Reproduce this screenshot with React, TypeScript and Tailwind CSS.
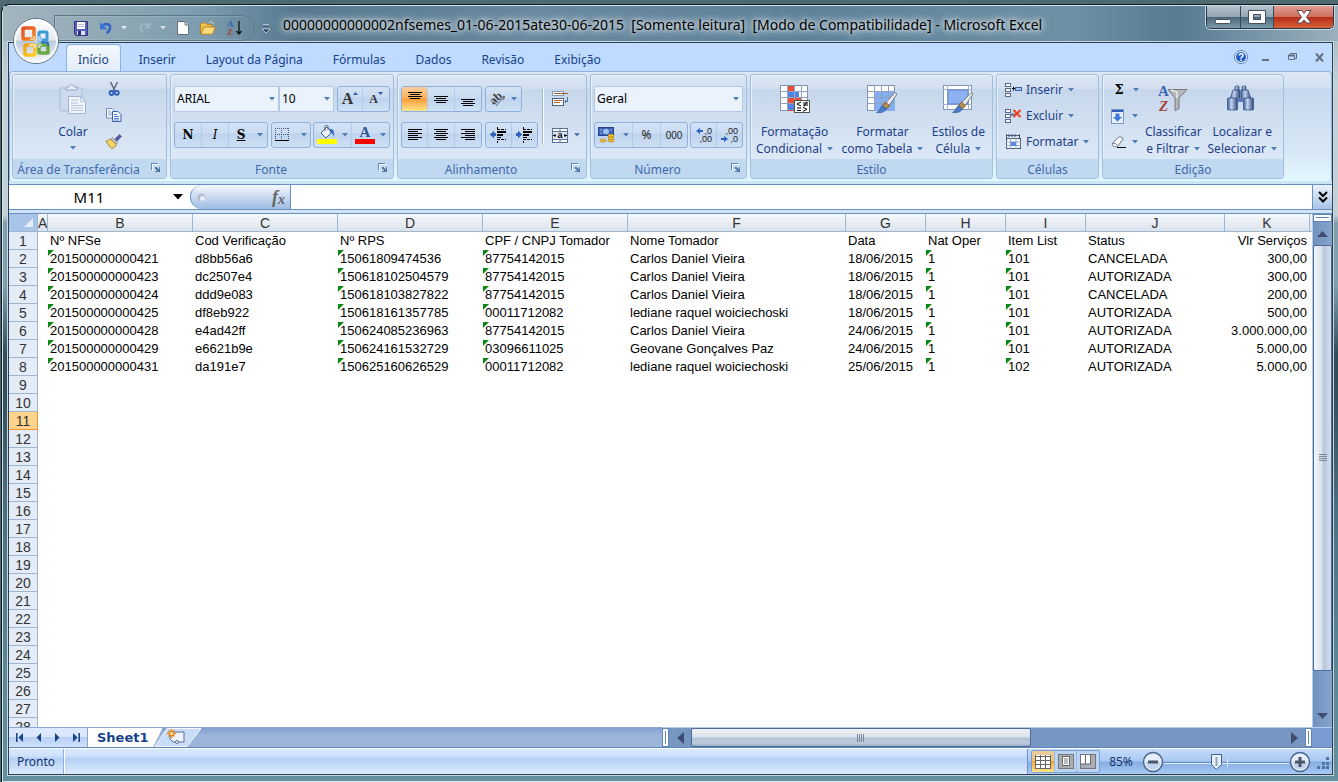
import React from 'react';

interface Row {
  nfse: string;
  cod: string;
  rps: string;
  doc: string;
  nome: string;
  data: string;
  nat: string;
  item: string;
  status: string;
  valor: string;
}

const HEAD: Row = {
  nfse: 'Nº NFSe',
  cod: 'Cod Verificação',
  rps: 'Nº RPS',
  doc: 'CPF / CNPJ Tomador',
  nome: 'Nome Tomador',
  data: 'Data',
  nat: 'Nat Oper',
  item: 'Item List',
  status: 'Status',
  valor: 'Vlr Serviços',
};

const DATA: Row[] = [
  { nfse: '201500000000421', cod: 'd8bb56a6', rps: '15061809474536', doc: '87754142015', nome: 'Carlos Daniel Vieira', data: '18/06/2015', nat: '1', item: '101', status: 'CANCELADA', valor: '300,00' },
  { nfse: '201500000000423', cod: 'dc2507e4', rps: '150618102504579', doc: '87754142015', nome: 'Carlos Daniel Vieira', data: '18/06/2015', nat: '1', item: '101', status: 'AUTORIZADA', valor: '300,00' },
  { nfse: '201500000000424', cod: 'ddd9e083', rps: '150618103827822', doc: '87754142015', nome: 'Carlos Daniel Vieira', data: '18/06/2015', nat: '1', item: '101', status: 'CANCELADA', valor: '200,00' },
  { nfse: '201500000000425', cod: 'df8eb922', rps: '150618161357785', doc: '00011712082', nome: 'lediane raquel woiciechoski', data: '18/06/2015', nat: '1', item: '101', status: 'AUTORIZADA', valor: '500,00' },
  { nfse: '201500000000428', cod: 'e4ad42ff', rps: '150624085236963', doc: '87754142015', nome: 'Carlos Daniel Vieira', data: '24/06/2015', nat: '1', item: '101', status: 'AUTORIZADA', valor: '3.000.000,00' },
  { nfse: '201500000000429', cod: 'e6621b9e', rps: '150624161532729', doc: '03096611025', nome: 'Geovane Gonçalves Paz', data: '24/06/2015', nat: '1', item: '101', status: 'AUTORIZADA', valor: '5.000,00' },
  { nfse: '201500000000431', cod: 'da191e7', rps: '150625160626529', doc: '00011712082', nome: 'lediane raquel woiciechoski', data: '25/06/2015', nat: '1', item: '102', status: 'AUTORIZADA', valor: '5.000,00' },
];

const FIELDS: (keyof Row)[] = ['nfse', 'cod', 'rps', 'doc', 'nome', 'data', 'nat', 'item', 'status', 'valor'];
const FLAGGED = ['nfse', 'rps', 'doc', 'nat', 'item'];
const LETTERS = ['A', 'B', 'C', 'D', 'E', 'F', 'G', 'H', 'I', 'J', 'K'];
const TABS = ['Início', 'Inserir', 'Layout da Página', 'Fórmulas', 'Dados', 'Revisão', 'Exibição'];

/* ---------- small pieces ---------- */

function Caret() {
  return (
    <svg width="6" height="4" viewBox="0 0 6 4" className="shrink-0">
      <path d="M0 0h6L3 3.5z" fill="#4f7db5" />
    </svg>
  );
}

interface LinesProps {
  rows: [number, number][];
  top?: number;
}

// horizontal text lines, each given as [x, width]
function Lines({ rows, top = 3 }: LinesProps) {
  return (
    <svg width="16" height="16" shapeRendering="crispEdges">
      {rows.map(([x, w], i) => (
        <rect key={i} x={x} y={top + i * 2} width={w} height="1" fill="#000" />
      ))}
    </svg>
  );
}

function Btn({ label, className = '', children }: { label: string; className?: string; children: React.ReactNode }) {
  return (
    <button type="button" aria-label={label} className={`flex items-center justify-center ${className}`}>
      {children}
    </button>
  );
}

function BtnGroup({ children }: { children: React.ReactNode }) {
  return (
    <div className="flex h-[26px] shrink-0 divide-x divide-[#b3cbea] overflow-hidden rounded-[3px] border border-[#8fb0dd] bg-[linear-gradient(#d3e2f4_0%,#cbdcf1_42%,#bdd3ee_46%,#cfe0f5_100%)]">
      {children}
    </div>
  );
}

function Combo({ label, options, className }: { label: string; options: string[]; className: string }) {
  return (
    <div className={`relative ${className}`}>
      <select
        aria-label={label}
        className="h-[26px] w-full appearance-none border border-[#b3c9e6] bg-[#eaf2fb] pl-[2px] text-[12px] text-black outline-none"
      >
        {options.map((o) => (
          <option key={o}>{o}</option>
        ))}
      </select>
      <span className="pointer-events-none absolute inset-y-0 right-1 flex items-center">
        <Caret />
      </span>
    </div>
  );
}

function Group({ title, className, launcher, children }: { title: string; className: string; launcher?: boolean; children: React.ReactNode }) {
  return (
    <section
      className={`flex h-[105px] shrink-0 flex-col overflow-hidden rounded-[3px] border border-[#a3bfdf] bg-[linear-gradient(#dbe6f3_0%,#d3e0f0_13%,#c7d7eb_14%,#dbe8f6_80%)] shadow-[inset_1px_1px_0_#e9f1fa] ${className}`}
    >
      <div className="flex h-[84px]">{children}</div>
      <div className="relative flex h-[19px] items-center justify-center bg-[#c1d8f1] pt-[2px] text-[#3e6aaa]">
        <h2 className={launcher ? 'whitespace-nowrap pr-[22px]' : ''}>{title}</h2>
        {launcher && (
          <button type="button" aria-label={`Opções de ${title}`} className="absolute right-[5px] top-1">
            <svg width="10" height="10" shapeRendering="crispEdges">
              <path d="M.5 7V.5H7" fill="none" stroke="#6088b5" />
              <path d="M1.5 8V1.5H8" fill="none" stroke="#fff" />
              <path d="M4 4h2v1h1v1h1V4h1v5H4V8h2V7H5V6H4z" fill="#55789f" />
            </svg>
          </button>
        )}
      </div>
    </section>
  );
}

function LargeButton({ icon, lines, caretBelow }: { icon: React.ReactNode; lines: string[]; caretBelow?: boolean }) {
  const last = lines[lines.length - 1];
  return (
    <button type="button" className="flex flex-col items-center whitespace-nowrap pt-2 text-[#1e3f8a]">
      <span className="mb-2 flex h-8 w-8 items-center justify-center">{icon}</span>
      {lines.slice(0, -1).map((l) => (
        <span key={l} className="leading-[17px]">{l}</span>
      ))}
      <span className="flex items-center gap-[5px] leading-[17px]">
        {last}
        {!caretBelow && <Caret />}
      </span>
      {caretBelow && <span className="flex h-[15px] items-center"><Caret /></span>}
    </button>
  );
}

/* ---------- icons ---------- */

function OfficeLogo() {
  return (
    <svg width="48" height="48" viewBox="0 0 48 48">
      <defs>
        <linearGradient id="orb" x1="0" y1="0" x2="0" y2="1">
          <stop offset="0" stopColor="#fff" />
          <stop offset=".48" stopColor="#e3e8ee" />
          <stop offset=".5" stopColor="#b9c8dd" />
          <stop offset="1" stopColor="#fbfdff" />
        </linearGradient>
        <linearGradient id="og1" x1="0" y1="0" x2="1" y2="1">
          <stop offset="0" stopColor="#e8502a" />
          <stop offset="1" stopColor="#f08a1e" />
        </linearGradient>
        <linearGradient id="og2" x1="0" y1="0" x2="1" y2="1">
          <stop offset="0" stopColor="#f3a21b" />
          <stop offset="1" stopColor="#fbd02a" />
        </linearGradient>
      </defs>
      <circle cx="23" cy="24" r="22.5" fill="url(#orb)" stroke="#5d7184" />
      <circle cx="23" cy="24" r="21" fill="none" stroke="#fff" strokeWidth="2" opacity=".8" />
      <g fill="none" strokeLinejoin="round">
        <rect x="10" y="11" width="11" height="11" rx="1" stroke="url(#og1)" strokeWidth="3.500" />
        <rect x="12" y="28" width="10" height="10" rx="1" stroke="url(#og2)" strokeWidth="3.500" />
        <rect x="26" y="15" width="8" height="8" rx="1" stroke="#3a9bd8" strokeWidth="3" />
        <rect x="26" y="28" width="9" height="8" rx="1" stroke="#6aa842" strokeWidth="3.500" />
        <path d="M17 22h4v-3M16 28h6v3M26 19v4h3M26 31v-3h3" stroke="#fff" strokeWidth="1.500" opacity=".7" />
        <path d="M28 25.500h7V29" stroke="#2d6fc0" strokeWidth="2" />
      </g>
    </svg>
  );
}

function SaveIcon() {
  return (
    <svg width="14" height="15" viewBox="0 0 14 15">
      <path d="M.5.5h13v14H2L.5 13z" fill="#5a5ec0" stroke="#34368a" />
      <rect x="3" y="1" width="8" height="7" fill="#fff" />
      <path d="M4 3.500h6M4 5.500h6" stroke="#b8bce0" />
      <rect x="3" y="10" width="8" height="4" fill="#dfe2f2" />
      <rect x="4" y="10" width="3" height="4" fill="#2c2e70" />
    </svg>
  );
}

function UndoIcon() {
  return (
    <svg width="14" height="14" viewBox="0 0 14 14">
      <path d="M3.500 5C6.500 1.500 12 3 11 7.500c-.3 2-1.500 3.500-3.500 4.500" fill="none" stroke="#2f63c4" strokeWidth="2.400" />
      <path d="M1 1v7.500h7.500z" fill="#3f76d6" />
    </svg>
  );
}

function RedoIcon() {
  return (
    <svg width="14" height="14" viewBox="0 0 14 14">
      <path d="M10 5C7 1.500 2 3 2.500 7c.2 1.500 1.200 3 2.500 4" fill="none" stroke="#9fb5c6" strokeWidth="2" />
      <path d="M12.500 1v6.500H6z" fill="#9fb5c6" />
    </svg>
  );
}

function NewIcon() {
  return (
    <svg width="12" height="14" viewBox="0 0 12 14">
      <path d="M.5.5H8l3.500 3.500v9.500H.5z" fill="#fff" stroke="#6a7280" />
      <path d="M8 .5V4h3.500" fill="#dde4ee" stroke="#6a7280" />
    </svg>
  );
}

function OpenIcon() {
  return (
    <svg width="16" height="14" viewBox="0 0 16 14">
      <path d="M.5 13V3.500L2 2h4l1 1.500h5V6" fill="#f3c44c" stroke="#b5842a" />
      <path d="M.8 13.200L4 6h11.500l-3 7.200z" fill="#fbdc7d" stroke="#b5842a" />
      <path d="M9 2c2-2 4-1 4.500 1" fill="none" stroke="#f6e6b0" />
    </svg>
  );
}

function SortAZIcon() {
  return (
    <svg width="15" height="16" viewBox="0 0 15 16">
      <text x="0" y="7" fontFamily="Liberation Serif" fontWeight="700" fontSize="9" fill="#2f62b0">A</text>
      <text x="0" y="15" fontFamily="Liberation Serif" fontWeight="700" fontSize="9" fill="#a8403c">Z</text>
      <path d="M12 1v13M9.500 11l2.500 3 2.500-3" fill="none" stroke="#111" strokeWidth="1.300" />
    </svg>
  );
}

function PasteIcon() {
  return (
    <svg width="28" height="30" viewBox="0 0 28 30">
      <rect x="1" y="4" width="22" height="23" rx="1" fill="#cdd9ec" stroke="#a9bcd8" />
      <path d="M7 6V3h3c0-3 5-3 5 0h3v3z" fill="#e8eef6" stroke="#94a8c4" />
      <path d="M9.500 12.500h12l5 5v12h-17z" fill="#f1f5fb" stroke="#9fb4d2" />
      <path d="M21.500 12.500v5h5M12 16h7M12 19h7M12 21.500h12M12 24h12M12 26.500h12" fill="none" stroke="#b4c5de" />
    </svg>
  );
}

function CutIcon() {
  return (
    <svg width="12" height="14" viewBox="0 0 12 14">
      <path d="M2.500 0L7 9M9.500 0L5 9" stroke="#5c6c80" strokeWidth="1.500" />
      <circle cx="3.500" cy="11" r="2" fill="none" stroke="#2f5cb8" strokeWidth="1.800" />
      <circle cx="8.800" cy="10.800" r="2" fill="none" stroke="#2f5cb8" strokeWidth="1.800" />
    </svg>
  );
}

function CopyIcon() {
  return (
    <svg width="16" height="14" viewBox="0 0 16 14">
      <path d="M.5.5H6L8.500 3v7H.5z" fill="#fff" stroke="#6c86b8" />
      <path d="M2 3h3M2 5h4M2 7h4" stroke="#7ea2dc" />
      <path d="M6.500 3.500H12l3 3v7H6.500z" fill="#eef4ff" stroke="#3b5ea8" />
      <path d="M8 6.500h3M8 8.500h5M8 10.500h5M8 12h5" stroke="#5585d6" />
    </svg>
  );
}

function BrushIcon() {
  return (
    <svg width="17" height="15" viewBox="0 0 17 15">
      <path d="M10 5l4.500-4.500 2 2L12 7z" fill="#5b5aa8" stroke="#3c3b78" strokeWidth=".6" />
      <path d="M7.500 3.500l5.500 5-1.500 1.500-5.500-4.500z" fill="#c9ccd2" stroke="#6a6a70" strokeWidth=".6" />
      <path d="M5.500 5L.8 7.500c2 .5 2.500 5 6 7 2-.2 3.500-2 4.500-3.800z" fill="#f2d56a" stroke="#9a7420" strokeWidth=".8" />
    </svg>
  );
}

function BordersIcon() {
  return (
    <svg width="14" height="14" viewBox="0 0 14 14" shapeRendering="crispEdges">
      <path d="M0 .5h14M.5 0v12M6.500 0v12M13.500 0v12M0 6.500h14" stroke="#4a5a70" strokeDasharray="1 1" />
      <rect x="0" y="12" width="14" height="1" fill="#000" />
    </svg>
  );
}

function BucketIcon() {
  return (
    <svg width="20" height="20" viewBox="0 0 20 20">
      <path d="M4 8l6-6 5 5-6 6z" fill="#eef2f8" stroke="#4a5f80" />
      <path d="M8 6V1.500c0-1.500 3-1.500 3 0V5" fill="none" stroke="#4a5f80" />
      <path d="M12 4c4-1 6 2 5 8-1-3-2-4-4-4.500z" fill="#3a6fc0" />
      <rect x="0" y="14" width="20" height="5" fill="#ff0" />
    </svg>
  );
}

function FontColorIcon() {
  return (
    <svg width="20" height="20" viewBox="0 0 20 20">
      <text x="10" y="12" textAnchor="middle" fontFamily="Liberation Serif" fontWeight="700" fontSize="15" fill="#2f5496">A</text>
      <rect x="0" y="14" width="20" height="5" fill="#f00" />
    </svg>
  );
}

function OrientationIcon() {
  return (
    <svg width="16" height="16" viewBox="0 0 16 16" className="overflow-visible">
      <text x="0" y="11" transform="rotate(-42 6 8)" fontFamily="Liberation Serif" fontWeight="700" fontSize="12" fill="#3b3b3b">ab</text>
      <path d="M6 15l8-9M10.500 6.500L14.500 5l-1 4" fill="none" stroke="#666" />
    </svg>
  );
}

function WrapIcon() {
  return (
    <svg width="17" height="16" viewBox="0 0 17 16" shapeRendering="crispEdges">
      <rect x=".5" y=".5" width="11" height="4" fill="#fff" stroke="#8a98b0" />
      <path d="M2 2.500h14" stroke="#a0602c" />
      <rect x=".5" y="7.500" width="11" height="7" fill="#fff" stroke="#4a6088" />
      <path d="M2 9.500h8M2 11.500h6" stroke="#b06020" />
      <path d="M15.500 6v4h-3M13.500 8.500v3" fill="none" stroke="#55709a" />
    </svg>
  );
}

function MergeIcon() {
  return (
    <svg width="16" height="15" viewBox="0 0 16 15">
      <rect x=".5" y=".5" width="15" height="14" fill="#fff" stroke="#5b7096" />
      <path d="M0 3.500h16M0 11.500h16M8 0v3.500M8 11.500V15" stroke="#5b7096" />
      <rect x="1" y="4" width="14" height="7" fill="#dce8f8" />
      <text x="8" y="10" textAnchor="middle" fontFamily="Liberation Sans" fontWeight="700" fontSize="9" fill="#000">a</text>
      <path d="M1 7.500h3M12 7.500h3M3 6v3M13 6v3" stroke="#000" />
    </svg>
  );
}

function IndentIcon({ right }: { right?: boolean }) {
  return (
    <svg width="17" height="16" viewBox="0 0 17 16" shapeRendering="crispEdges">
      <path d="M7 2.500h9M7 12.500h9" stroke="#000" strokeDasharray="3 1" />
      <path d="M7 5h9M7 8h6" stroke="#000" strokeWidth="2" />
      <path d="M7 10.500h4M7.500 0v2M7.500 14v2" stroke="#000" />
      <path d={right ? 'M0 6h2V4l4 3.500L2 11V9H0z' : 'M6 6H4V4L0 7.500 4 11V9h2z'} fill="#2f62c0" />
    </svg>
  );
}

function MoneyIcon() {
  return (
    <svg width="17" height="16" viewBox="0 0 17 16">
      <rect x=".5" y=".5" width="15" height="8" fill="#3a62b8" stroke="#234488" />
      <ellipse cx="8" cy="4.500" rx="3" ry="2.800" fill="#9fc0f0" />
      <path d="M2 3h2M2 6h2M12 3h2" stroke="#9fc0f0" />
      <g fill="#f5c03c" stroke="#a87412" strokeWidth=".6">
        <ellipse cx="13" cy="13.500" rx="3" ry="1.500" />
        <ellipse cx="13" cy="11" rx="3" ry="1.500" />
        <ellipse cx="13" cy="8.500" rx="3" ry="1.500" />
        <ellipse cx="5" cy="13.500" rx="3" ry="1.500" />
      </g>
    </svg>
  );
}

function DecimalIcon({ less }: { less?: boolean }) {
  return (
    <svg width="18" height="18" viewBox="0 0 18 18">
      <g fontFamily="Liberation Sans" fontSize="9" fill="#222">
        <text x="17" y="8" textAnchor="end">{less ? ',00' : ',0'}</text>
        <text x="17" y="16" textAnchor="end">{less ? ',0' : ',00'}</text>
      </g>
      <path d={less ? 'M0 12h3v-2l4 3-4 3v-2H0z' : 'M8 4H5V2L1 5l4 3V6h3z'} fill="#2f62c0" />
    </svg>
  );
}

function Grid({ children }: { children?: React.ReactNode }) {
  return (
    <>
      <rect x="1.500" y="1.500" width="27" height="25" fill="#fff" stroke="#8093b0" />
      {children}
      <path d="M1 7.500h28M1 13.500h28M1 19.500h28M8.500 1v26M15.500 1v26M22.500 1v26" stroke="#8ea3c4" />
    </>
  );
}

function PaintBrush() {
  return (
    <g>
      <path d="M29 8.500l2 1.500-8.500 12.500-3.500-3z" fill="#e8e8ea" stroke="#66686e" strokeWidth=".8" />
      <path d="M19.500 18l4 3.500-3 3.500-4-3.500z" fill="#b8924a" stroke="#6b4f20" strokeWidth=".8" />
      <path d="M16.500 21.500l4 3.500c-2 3.500-6 4-10 3.500 3-1 3-4.500 6-7z" fill="#4a7cc8" stroke="#2d5596" strokeWidth=".6" />
    </g>
  );
}

function CondFormatIcon() {
  return (
    <svg width="32" height="30" viewBox="0 0 32 30">
      <Grid>
        <rect x="9" y="2" width="6" height="25" fill="#ea4f37" />
        <rect x="9" y="8" width="11" height="5" fill="#5485e0" />
        <rect x="9" y="14" width="13" height="5" fill="#ea4f37" />
        <rect x="9" y="20" width="6" height="6" fill="#5485e0" />
      </Grid>
      <rect x="15.500" y="16.500" width="15" height="12" fill="#fff" stroke="#555" />
      <path d="M22 18l-4 2 4 2M18 24h4M18 26.500h4M24 19h5M24 21h5M28 17.500l-3 5M24 23.500l4 1.800-4 2" fill="none" stroke="#000" />
    </svg>
  );
}

function TableFormatIcon() {
  return (
    <svg width="32" height="30" viewBox="0 0 32 30">
      <Grid>
        <rect x="9" y="8" width="20" height="19" fill="#85aef0" />
      </Grid>
      <PaintBrush />
    </svg>
  );
}

function CellStyleIcon() {
  return (
    <svg width="32" height="30" viewBox="0 0 32 30">
      <rect x="1.500" y="1.500" width="28" height="24" fill="#fff" stroke="#8093b0" />
      <path d="M5.500 1v25M26.500 1v25M1 5.500h29M1 20.500h29" stroke="#a3b5d0" />
      <rect x="6" y="6" width="20" height="14" fill="#8db2f3" stroke="#5a86d0" />
      <PaintBrush />
    </svg>
  );
}

function CellsIcon({ kind }: { kind: 'insert' | 'delete' | 'format' }) {
  if (kind === 'format') {
    return (
      <svg width="17" height="16" viewBox="0 0 17 16">
        <path d="M1.500 0v4M1.500 1.500h13M14.500 0v4M4 0v3M7 0v3M10 0v3" stroke="#445a7a" fill="none" />
        <rect x="1.500" y="4.500" width="14" height="10" fill="#fff" stroke="#445a7a" />
        <path d="M1 8h15M1 11.500h15M5.500 4v11M11 4v11" stroke="#8ea3c4" />
        <rect x="6" y="8" width="5" height="4" fill="#5a8ae0" />
      </svg>
    );
  }
  return (
    <svg width="17" height="14" viewBox="0 0 17 14">
      <g fill="#fff" stroke="#56688a">
        <rect x=".5" y=".5" width="5" height="3" />
        <rect x=".5" y="5.500" width="5" height="3" />
        <rect x=".5" y="10.500" width="5" height="3" />
      </g>
      {kind === 'insert' ? (
        <>
          <path d="M7 5.500h4M8.500 3.500v4" stroke="#111" />
          <rect x="10.500" y="4.500" width="6" height="3" fill="#a7c6f5" stroke="#3c5f9c" />
        </>
      ) : (
        <>
          <path d="M6 5.500h4" stroke="#56688a" strokeWidth="2" />
          <path d="M8.500 1l7 7M15.500 1l-7 7" stroke="#ee3f22" strokeWidth="2" />
        </>
      )}
    </svg>
  );
}

function FillIcon() {
  return (
    <svg width="13" height="15" viewBox="0 0 13 15">
      <rect x=".5" y=".5" width="12" height="14" fill="#e4eefb" stroke="#7d98c0" />
      <path d="M1 2h11" stroke="#2f5cb8" strokeWidth="2" />
      <path d="M4.500 4.500h4V8H11l-4.500 4.500L2 8h2.500z" fill="#3f78dc" />
    </svg>
  );
}

function EraserIcon() {
  return (
    <svg width="15" height="13" viewBox="0 0 15 13">
      <path d="M1 8l6-6.500c1-1 5-.5 5 1.500L6.500 10.500c-1 1-5.500 0-5.500-2.500z" fill="#fff" stroke="#66758c" />
      <path d="M1 8c1-1.500 5-.5 5.500 2" fill="none" stroke="#66758c" />
      <path d="M6 11.500h9" stroke="#000" />
    </svg>
  );
}

function SortFilterIcon() {
  return (
    <svg width="32" height="32" viewBox="0 0 32 32">
      <path d="M11 6.500h19l-8 8.500v10.500l-4 2V15z" fill="#b4b6ba" stroke="#77797e" />
      <path d="M20 15V9l-6-2" fill="none" stroke="#e9eaec" strokeWidth="1.500" />
      <text x="1" y="13" fontFamily="Liberation Serif" fontWeight="700" fontSize="15" fill="#3a66b4">A</text>
      <text x="2" y="28" fontFamily="Liberation Serif" fontWeight="700" fontStyle="italic" fontSize="15" fill="#a8403c">Z</text>
    </svg>
  );
}

function BinocularsIcon() {
  return (
    <svg width="32" height="28" viewBox="0 0 32 28">
      <defs>
        <linearGradient id="bino">
          <stop offset="0" stopColor="#3f5d96" />
          <stop offset=".4" stopColor="#c3d2ee" />
          <stop offset="1" stopColor="#2d477c" />
        </linearGradient>
      </defs>
      <g fill="url(#bino)" stroke="#2d477c" strokeWidth=".7">
        <rect x="9" y="1" width="4" height="4" rx="1" />
        <rect x="16" y="1" width="4" height="4" rx="1" />
        <path d="M7 5h7v9H4z" />
        <path d="M15 5h7l3 9H15z" />
        <rect x="1.500" y="13" width="10" height="12" rx="1" />
        <rect x="17.500" y="13" width="10" height="12" rx="1" />
      </g>
      <path d="M11.500 13h6v4h-6z" fill="#5c78b0" />
    </svg>
  );
}

/* ---------- title bar ---------- */

function TitleBar() {
  return (
    <header className="relative flex h-[35px] items-start bg-[linear-gradient(90deg,#a3b5bf_0%,#8fa8b4_8%,#7c9cae_15%,#56798e_22%,#6889a0_40%,#5c8199_60%,#6d90a4_80%,#567b92_88%,#9bb0bc_100%)] pr-1">
      <div className="ml-[51px] mt-[9px] flex h-[26px] w-[200px] shrink-0 items-center rounded-r-full border border-[#5b7687] pl-[19px] shadow-[inset_0_0_0_1px_#ffffff22]">
        <div className="flex items-center gap-[11px]">
          <Btn label="Salvar"><SaveIcon /></Btn>
          <Btn label="Desfazer" className="gap-2"><UndoIcon /><svg width="6" height="4"><path d="M0 0h6L3 3.500z" fill="#dce8f2" /></svg></Btn>
          <Btn label="Refazer" className="gap-2"><RedoIcon /><svg width="6" height="4"><path d="M0 0h6L3 3.500z" fill="#d3dfe8" /></svg></Btn>
          <Btn label="Novo"><NewIcon /></Btn>
          <Btn label="Abrir"><OpenIcon /></Btn>
          <Btn label="Classificar"><SortAZIcon /></Btn>
        </div>
      </div>
      <Btn label="Personalizar" className="ml-2 mt-[18px] shrink-0">
        <svg width="8" height="10">
          <path d="M1 1h6" stroke="#fff" /><path d="M1 2h6" stroke="#1e3c6e" />
          <path d="M0 5h8L4 9z" fill="#1e3c6e" stroke="#fff" strokeWidth=".6" />
        </svg>
      </Btn>
      <h1 className="ml-[13px] mt-2 flex-1 whitespace-pre text-[14px] leading-[22px] text-black [text-shadow:0_0_4px_#ffffffcc,0_0_8px_#ffffffcc,0_0_12px_#ffffffcc]">
        {'00000000000002nfsemes_01-06-2015ate30-06-2015  [Somente leitura]  [Modo de Compatibilidade] - Microsoft Excel'}
      </h1>
      <div className="flex h-[23px] w-[128px] shrink-0 overflow-hidden rounded-b-[5px] border border-t-0 border-[#27384a] shadow-[0_0_0_1px_#c8d8e2]">
        <Btn label="Minimizar" className="flex-1 border-r border-[#33495c] bg-[linear-gradient(#b5c3cc_0%,#93a6b2_48%,#4c6879_52%,#7d9bac_100%)]">
          <svg width="18" height="16"><rect x="1.500" y="10.500" width="15" height="4" rx="1" fill="#fff" stroke="#414f5f" /></svg>
        </Btn>
        <Btn label="Restaurar" className="flex-1 border-r border-[#33495c] bg-[linear-gradient(#b5c3cc_0%,#93a6b2_48%,#4c6879_52%,#7d9bac_100%)]">
          <svg width="18" height="16"><path d="M.5 1.500h17v13H.5zM5.500 5.500h7v5h-7z" fillRule="evenodd" fill="#fff" stroke="#414f5f" /></svg>
        </Btn>
        <Btn label="Fechar" className="w-[59px] bg-[linear-gradient(#e09e92_0%,#cf6f60_48%,#b92d16_52%,#d8623a_100%)]">
          <svg width="18" height="16"><path d="M2 1.500h4.500L9 4.500l2.500-3H16L11.500 8l4.500 6h-4.500L9 11l-2.500 3H2L6.500 8z" fill="#fff" stroke="#59434a" /></svg>
        </Btn>
      </div>
      <button type="button" aria-label="Botão Office" className="absolute left-[10px] top-[11px] z-10">
        <OfficeLogo />
      </button>
    </header>
  );
}

/* ---------- ribbon ---------- */

function RibbonTabs() {
  return (
    <nav className="flex h-7 items-end bg-[#bfdbff] pl-[57px] text-[#15428b]">
      <div className="flex gap-[6px]">
        {TABS.map((t, i) => (
          <button
            key={t}
            type="button"
            className={
              i === 0
                ? 'h-[27px] rounded-t-[4px] border border-b-0 border-[#8db2e3] bg-[linear-gradient(#f5f9fe,#e2ecf8)] px-[11px] pt-[3px] shadow-[inset_0_0_0_1px_#dff5ff]'
                : 'h-[27px] px-3 pt-1'
            }
          >
            {t}
          </button>
        ))}
      </div>
      <div className="ml-auto flex h-7 items-center gap-[14px] pr-2">
        <Btn label="Ajuda">
          <svg width="14" height="14">
            <circle cx="7" cy="7" r="6.500" fill="#fff" stroke="#4d79bb" />
            <circle cx="7" cy="7" r="5" fill="#1f5cc8" />
            <text x="7" y="11" textAnchor="middle" fontFamily="Liberation Sans" fontWeight="700" fontSize="10" fill="#fff">?</text>
          </svg>
        </Btn>
        <Btn label="Minimizar janela"><svg width="8" height="10"><rect y="7" width="7" height="2" fill="#666f7c" /></svg></Btn>
        <Btn label="Restaurar janela" className="ml-1">
          <svg width="9" height="8"><path d="M2.500 2V.5h6v5H7M.5 2.500h6v4h-6z" fill="none" stroke="#666f7c" /><path d="M0 2.500h7" stroke="#666f7c" strokeWidth="2" /></svg>
        </Btn>
        <Btn label="Fechar janela" className="ml-1"><svg width="9" height="9"><path d="M1 .5l7 8M8 .5l-7 8" stroke="#666f7c" strokeWidth="2" /></svg></Btn>
      </div>
    </nav>
  );
}

function Ribbon() {
  return (
    <div className="flex h-[111px] gap-[3px] rounded-[4px] border border-[#8db2e3] border-b-[#b9f0ff] bg-[linear-gradient(#dde8f5_0%,#d3e1f1_14%,#c6d8ee_15%,#d9e8f7_75%,#e4f8ff_100%)] px-[2px] pt-[2px]">
      <Group title="Área de Transferência" launcher className="w-[155px]">
        <div className="flex flex-1 justify-center gap-4">
          <LargeButton icon={<PasteIcon />} lines={['Colar']} caretBelow />
          <div className="flex flex-col pt-px">
            <Btn label="Recortar" className="h-[26px]"><CutIcon /></Btn>
            <Btn label="Copiar" className="h-[26px]"><CopyIcon /></Btn>
            <Btn label="Pincel" className="h-[26px]"><BrushIcon /></Btn>
          </div>
        </div>
      </Group>

      <Group title="Fonte" launcher className="w-[224px]">
        <div className="flex flex-1 flex-col gap-[10px] px-[3px] pt-[11px]">
          <div className="flex justify-between">
            <div className="flex">
              <Combo label="Fonte" options={['ARIAL', 'Calibri']} className="w-[105px]" />
              <Combo label="Tamanho" options={['10', '11', '12']} className="w-[55px]" />
            </div>
            <BtnGroup>
              <Btn label="Aumentar fonte" className="w-[25px] font-['Liberation_Serif',serif] text-[16px] font-bold text-[#333]">
                A<svg width="5" height="14"><path d="M0 3h5L2.500 0z" fill="#2f5cb8" /></svg>
              </Btn>
              <Btn label="Reduzir fonte" className="w-[26px] font-['Liberation_Serif',serif] text-[12px] font-bold text-[#333]">
                A<svg width="5" height="14"><path d="M0 0h5L2.500 3z" fill="#2f5cb8" /></svg>
              </Btn>
            </BtnGroup>
          </div>
          <div className="flex justify-between text-[12px] text-black">
            <BtnGroup>
              <Btn label="Negrito" className="w-[27px] font-['DejaVu_Serif',serif] font-bold">N</Btn>
              <Btn label="Itálico" className="w-[27px] font-['DejaVu_Serif',serif] italic">I</Btn>
              <Btn label="Sublinhado" className="w-[38px] gap-3 pl-1 font-['DejaVu_Serif',serif] font-bold underline">S<Caret /></Btn>
            </BtnGroup>
            <BtnGroup>
              <Btn label="Bordas" className="w-[38px] gap-3"><BordersIcon /><Caret /></Btn>
            </BtnGroup>
            <BtnGroup>
              <Btn label="Cor de preenchimento" className="w-[38px] gap-[5px]"><BucketIcon /><Caret /></Btn>
              <Btn label="Cor da fonte" className="w-[37px] gap-[5px]"><FontColorIcon /><Caret /></Btn>
            </BtnGroup>
          </div>
        </div>
      </Group>

      <Group title="Alinhamento" launcher className="w-[190px]">
        <div className="flex gap-2 pl-[3px] pt-[11px]">
          <div className="flex flex-col gap-[10px]">
            <div className="flex gap-[3px]">
              <BtnGroup>
                <Btn label="Alinhar em cima" className="w-[26px] bg-[linear-gradient(#fbcf9c_0%,#fcb258_45%,#ff9d3b_50%,#ffe588_100%)]"><Lines top={1} rows={[[1, 14], [3, 10], [1, 14], [3, 10]]} /></Btn>
                <Btn label="Alinhar no meio" className="w-[27px]"><Lines top={5} rows={[[1, 14], [3, 10], [1, 14], [3, 10]]} /></Btn>
                <Btn label="Alinhar embaixo" className="w-[26px]"><Lines top={8} rows={[[1, 14], [3, 10], [1, 14], [3, 10]]} /></Btn>
              </BtnGroup>
              <BtnGroup>
                <Btn label="Orientação" className="w-[35px] gap-[5px]"><OrientationIcon /><Caret /></Btn>
              </BtnGroup>
            </div>
            <div className="flex gap-[3px]">
              <BtnGroup>
                <Btn label="Alinhar à esquerda" className="w-[26px]"><Lines top={2} rows={[[1, 14], [1, 10], [1, 14], [1, 10], [1, 14], [1, 10]]} /></Btn>
                <Btn label="Centralizar" className="w-[27px]"><Lines top={2} rows={[[1, 14], [3, 10], [1, 14], [3, 10], [1, 14], [3, 10]]} /></Btn>
                <Btn label="Alinhar à direita" className="w-[26px]"><Lines top={2} rows={[[1, 14], [5, 10], [1, 14], [5, 10], [1, 14], [5, 10]]} /></Btn>
              </BtnGroup>
              <BtnGroup>
                <Btn label="Diminuir recuo" className="w-[26px]"><IndentIcon /></Btn>
                <Btn label="Aumentar recuo" className="w-[25px]"><IndentIcon right /></Btn>
              </BtnGroup>
            </div>
          </div>
          <div className="-ml-1 mt-[3px] h-[55px] w-[2px] border-l border-[#9bb8dc] bg-white" />
          <div className="flex flex-col gap-[10px]">
            <Btn label="Quebrar texto" className="h-[26px] self-start"><WrapIcon /></Btn>
            <Btn label="Mesclar" className="h-[26px] gap-[6px]"><MergeIcon /><Caret /></Btn>
          </div>
        </div>
      </Group>

      <Group title="Número" launcher className="w-[157px]">
        <div className="flex flex-1 flex-col gap-[10px] px-[3px] pt-[11px]">
          <Combo label="Formato" options={['Geral', 'Número', 'Moeda']} className="w-full" />
          <div className="flex justify-between text-[12px] text-[#222]">
            <BtnGroup>
              <Btn label="Moeda" className="w-[38px] gap-2"><MoneyIcon /><Caret /></Btn>
              <Btn label="Porcentagem" className="w-[28px]">%</Btn>
              <Btn label="Milhares" className="w-[26px] font-['Liberation_Sans',sans-serif] text-[10px]">000</Btn>
            </BtnGroup>
            <BtnGroup>
              <Btn label="Aumentar casas" className="w-[26px]"><DecimalIcon /></Btn>
              <Btn label="Diminuir casas" className="w-[25px]"><DecimalIcon less /></Btn>
            </BtnGroup>
          </div>
        </div>
      </Group>

      <Group title="Estilo" className="w-[243px]">
        <div className="flex flex-1 justify-between pl-[5px] pr-[7px]">
          <LargeButton icon={<CondFormatIcon />} lines={['Formatação', 'Condicional']} />
          <LargeButton icon={<TableFormatIcon />} lines={['Formatar', 'como Tabela']} />
          <LargeButton icon={<CellStyleIcon />} lines={['Estilos de', 'Célula']} />
        </div>
      </Group>

      <Group title="Células" className="w-[103px]">
        <div className="flex flex-col pl-2 pt-[2px] text-[#1e3f8a]">
          <button type="button" className="flex h-[26px] items-center gap-1"><CellsIcon kind="insert" />Inserir<span className="ml-px flex"><Caret /></span></button>
          <button type="button" className="flex h-[26px] items-center gap-1"><CellsIcon kind="delete" />Excluir<span className="ml-px flex"><Caret /></span></button>
          <button type="button" className="flex h-[26px] items-center gap-1"><CellsIcon kind="format" />Formatar<span className="ml-px flex"><Caret /></span></button>
        </div>
      </Group>

      <Group title="Edição" className="w-[182px]">
        <div className="flex flex-1 justify-between pl-2 pr-[6px]">
          <div className="flex flex-col items-start pt-[2px]">
            <Btn label="Soma" className="h-[26px] gap-[6px] font-['DejaVu_Serif',serif] text-[13px] font-bold text-black"><span className="w-4">Σ</span><Caret /></Btn>
            <Btn label="Preencher" className="h-[26px] gap-2"><FillIcon /><Caret /></Btn>
            <Btn label="Limpar" className="h-[26px] gap-[6px]"><EraserIcon /><Caret /></Btn>
          </div>
          <LargeButton icon={<SortFilterIcon />} lines={['Classificar', 'e Filtrar']} />
          <LargeButton icon={<BinocularsIcon />} lines={['Localizar e', 'Selecionar']} />
        </div>
      </Group>
    </div>
  );
}

/* ---------- sheet ---------- */

function FormulaBar() {
  return (
    <div className="mt-[2px] flex h-[26px] shrink-0 border-y border-[#6590bf] bg-white">
      <label className="flex w-[181px] shrink-0 items-center">
        <input aria-label="Caixa de nome" defaultValue="M11" className="w-[160px] bg-transparent text-center text-[15px] text-black outline-none" />
        <svg width="10" height="6" className="ml-1"><path d="M0 0h10L5 5.500z" fill="#000" /></svg>
      </label>
      <div className="flex w-[101px] shrink-0 items-center justify-between rounded-l-full border border-y-0 border-[#6590bf] bg-[linear-gradient(#f4f8fd_0%,#c5d6ee_55%,#9dbbe3_100%)] pl-[6px] pr-[5px]">
        <svg width="9" height="9"><circle cx="4.500" cy="4.500" r="4" fill="#b3bfd1" /><circle cx="5.500" cy="5.500" r="2.500" fill="#e7edf5" /></svg>
        <Btn label="Inserir função" className="font-['Liberation_Serif',serif] text-[18px] font-bold italic text-[#666]">
          f<span className="pt-1 text-[14px]">x</span>
        </Btn>
      </div>
      <input aria-label="Barra de fórmulas" className="min-w-0 flex-1 bg-white px-1 outline-none" />
      <Btn label="Expandir barra" className="w-5 border-l border-[#6590bf] bg-[linear-gradient(#eaf2fc,#a9c4e8)]">
        <svg width="10" height="12"><path d="M1 1l4 4 4-4M1 6.500l4 4 4-4" fill="none" stroke="#000" strokeWidth="2" /></svg>
      </Btn>
    </div>
  );
}

function Sheet() {
  return (
    <div className="min-w-0 flex-1 overflow-hidden bg-white font-['Liberation_Sans',Arial,sans-serif]">
      <table className="w-full table-fixed border-separate border-spacing-0 text-[13px] text-black">
        <colgroup>
          <col className="w-[29px]" />
          <col className="w-[10px]" />
          <col className="w-[145px]" />
          <col className="w-[145px]" />
          <col className="w-[145px]" />
          <col className="w-[145px]" />
          <col className="w-[218px]" />
          <col className="w-[80px]" />
          <col className="w-[80px]" />
          <col className="w-[80px]" />
          <col className="w-[139px]" />
          <col className="w-[85px]" />
          <col />
        </colgroup>
        <thead>
          <tr className="h-[18px] bg-[linear-gradient(#f6f9fc,#d9e1ec)] text-[14px] leading-[16px] text-[#333]">
            <th className="border-b border-r border-[#9eb6ce] bg-[#a9c4e9] p-0">
              <svg width="9" height="9" className="ml-auto mr-1"><path d="M9 0v9H0z" fill="#e4edf8" /></svg>
            </th>
            {LETTERS.map((l) => (
              <th key={l} className="overflow-hidden border-b border-r border-[#9eb6ce] p-0 pt-px font-normal">{l}</th>
            ))}
            <th className="border-b border-[#9eb6ce] p-0" />
          </tr>
        </thead>
        <tbody>
          {Array.from({ length: 28 }, (_, i) => i + 1).map((n) => {
            const row = n === 1 ? HEAD : DATA[n - 2];
            return (
              <tr key={n} className="h-[18px] leading-[16px]">
                <th
                  className={`border-b border-r p-0 pt-px text-[14px] font-normal text-[#333] ${
                    n === 11 ? 'border-[#f29536] bg-[#ffd58d]' : 'border-[#9eb6ce] bg-[#e4ecf7]'
                  }`}
                >
                  {n}
                </th>
                <td className="p-0" />
                {FIELDS.map((f) => (
                  <td key={f} className={`relative whitespace-nowrap p-0 pb-px ${f === 'valor' ? 'pr-[3px] text-right' : 'pl-[2px]'}`}>
                    {n > 1 && row && FLAGGED.includes(f) && (
                      <svg width="6" height="6" className="absolute left-0 top-0"><path d="M0 0h6L0 6z" fill="#0a8a14" /></svg>
                    )}
                    {row && row[f]}
                  </td>
                ))}
                <td className="p-0" />
              </tr>
            );
          })}
        </tbody>
      </table>
    </div>
  );
}

function VScroll() {
  return (
    <div className="flex w-5 shrink-0 flex-col border-l border-[#b5cdec] bg-[linear-gradient(90deg,#7192bf,#86a4cd)]">
      <div className="mb-px h-2 border border-[#5f87b8] bg-white p-[2px]"><div className="h-px bg-[#5f87b8]" /></div>
      <Btn label="Rolar para cima" className="h-[22px]"><svg width="11" height="6"><path d="M0 6h11L5.500 0z" fill="#3f4d70" /></svg></Btn>
      <div className="flex flex-[427] items-center justify-center rounded-[2px] border border-[#4f6b9a] bg-[linear-gradient(90deg,#f3f6fa_0%,#dde3ec_45%,#b7c7dc_55%,#d4dfee_100%)]">
        <svg width="8" height="8" shapeRendering="crispEdges"><path d="M0 .5h8M0 2.500h8M0 4.500h8M0 6.500h8" stroke="#7c8797" /></svg>
      </div>
      <div className="flex flex-[56] flex-col justify-end">
        <Btn label="Rolar para baixo" className="h-[22px]"><svg width="11" height="6"><path d="M0 0h11L5.500 6z" fill="#3f4d70" /></svg></Btn>
      </div>
    </div>
  );
}

function SheetBar() {
  return (
    <div className="flex h-[21px] shrink-0 border-b border-[#5f87b8] bg-[#7796c1]">
      <div className="flex min-w-0 flex-1 border-t border-[#8aa6d0] bg-[linear-gradient(#82a0d0_0%,#9db5db_40%,#9db5db_100%)]">
        <div className="flex w-[79px] items-center justify-around border-r border-[#8aa6d0] bg-[linear-gradient(#dbe8fb_0%,#dbe8fb_45%,#b8d1f5_50%,#cfe0fa_100%)] px-px">
          <Btn label="Primeira"><svg width="8" height="9"><path d="M.5 0v9" stroke="#15428b" strokeWidth="2" /><path d="M7 0v9L2.500 4.500z" fill="#15428b" /></svg></Btn>
          <Btn label="Anterior"><svg width="6" height="9"><path d="M5 0v9L.5 4.500z" fill="#15428b" /></svg></Btn>
          <Btn label="Próxima"><svg width="6" height="9"><path d="M1 0v9l4.500-4.500z" fill="#15428b" /></svg></Btn>
          <Btn label="Última"><svg width="8" height="9"><path d="M7.500 0v9" stroke="#15428b" strokeWidth="2" /><path d="M1 0v9l4.500-4.500z" fill="#15428b" /></svg></Btn>
        </div>
        <button type="button" className="h-[19px] w-[74px] bg-white pl-[9px] text-left font-['DejaVu_Sans',sans-serif] text-[13px] font-bold leading-[19px] text-[#15428b] [clip-path:polygon(0_0,100%_0,100%_5%,88%_100%,0_100%)]">
          Sheet1
        </button>
        <Btn label="Inserir planilha" className="-ml-2 h-[19px]">
          <svg width="48" height="19">
            <path d="M1 18.500L13 .5h34l-14 18z" fill="#c9dcf7" stroke="#f5f9ff" />
            <path d="M16 4h14v10H19l-3-3z" fill="#eef3fb" stroke="#5c6f94" />
            <circle cx="23" cy="14" r="1.500" fill="#fff" stroke="#5c6f94" />
            <path d="M17.500 1v9M13 5.500h9M14.500 2.500l6 6M20.500 2.500l-6 6" stroke="#e0861a" strokeWidth="1.500" />
            <circle cx="17.500" cy="5.500" r="1.500" fill="#ffe9a0" />
          </svg>
        </Btn>
      </div>
      <div className="flex w-[670px] shrink-0 border-t border-[#b5cdec]">
        <div className="w-[7px] border border-[#5f87b8] bg-white p-[2px]"><div className="h-full w-px bg-[#5f87b8]" /></div>
        <Btn label="Rolar para a esquerda" className="w-[22px]"><svg width="7" height="12"><path d="M7 0v12L0 6z" fill="#3f4d70" /></svg></Btn>
        <div className="flex h-[19px] w-[340px] items-center justify-center rounded-[2px] border border-[#4f6b9a] bg-[linear-gradient(#eff3f7_0%,#dbe1e9_48%,#b5c5d8_52%,#b9c9db_85%,#98abc6_100%)]">
          <svg width="8" height="8" shapeRendering="crispEdges"><path d="M.5 0v8M2.500 0v8M4.500 0v8M6.500 0v8" stroke="#7c8797" /></svg>
        </div>
        <div className="flex-1" />
        <Btn label="Rolar para a direita" className="w-[22px]"><svg width="7" height="12"><path d="M0 0v12l7-6z" fill="#3f4d70" /></svg></Btn>
        <div className="w-[7px] border border-[#5f87b8] bg-white p-[2px]"><div className="h-full w-px bg-[#5f87b8]" /></div>
        <div className="w-5 bg-[#7b9cd3]" />
      </div>
    </div>
  );
}

function ZoomButton({ label, plus }: { label: string; plus?: boolean }) {
  return (
    <Btn label={label}>
      <svg width="22" height="22">
        <circle cx="11" cy="11" r="9.500" fill="#e6eef9" stroke="#4b6690" strokeWidth="1.500" />
        <path d="M3.500 11a7.500 7.500 0 0 0 15 0z" fill="#c3d5ee" />
        <path d={plus ? 'M6 11h10M11 6v10' : 'M6 11h10'} stroke="#4a5768" strokeWidth="3" />
      </svg>
    </Btn>
  );
}

function StatusBar() {
  return (
    <footer className="flex h-[26px] shrink-0 border-t border-white bg-[linear-gradient(#dbe9fc_0%,#c9defa_32%,#b3d0f5_36%,#dbe9fc_100%)] text-[#15356b]">
      <div className="flex w-[55px] items-center justify-center border-r border-[#8fb0dc]">Pronto</div>
      <div className="flex-1 border-l border-white" />
      <div className="flex w-[305px] shrink-0 items-center border-l border-[#6a93cc] bg-[linear-gradient(#c3dcfb_0%,#a9c9f2_48%,#85aee3_52%,#a8c9f3_100%)]">
        <div className="ml-[3px] flex h-[23px] w-[69px] divide-x divide-[#9dbce5] rounded-[2px] border border-[#7d9fd0] bg-[#bcd4f4]">
          <Btn label="Normal" className="flex-1 bg-[linear-gradient(#e9cfa2_0%,#f2c070_45%,#f0a830_50%,#ffe48a_100%)]">
            <svg width="16" height="14" shapeRendering="crispEdges"><path d="M0 0h16v14H0z" fill="#fff" /><path d="M0 1h16M.5 0v14M15.500 0v14M5.500 0v14M10.500 0v14M0 5.500h16M0 9.500h16M0 13.500h16" stroke="#666" /></svg>
          </Btn>
          <Btn label="Layout da Página" className="flex-1">
            <svg width="16" height="15"><rect x=".5" y=".5" width="15" height="14" fill="#a9aeb6" stroke="#777" /><rect x="4.500" y="2.500" width="7" height="9" fill="#fff" stroke="#666" /><path d="M6 5h4M6 7h4M6 9h4" stroke="#777" /></svg>
          </Btn>
          <Btn label="Quebra de Página" className="flex-1">
            <svg width="16" height="15"><rect x=".5" y=".5" width="15" height="14" fill="#a9aeb6" stroke="#777" /><path d="M1 1h4v9H1zM6 1h4v9H6z" fill="#fff" /><path d="M5.500 1v9M10.500 1v9H1" fill="none" stroke="#666" /></svg>
          </Btn>
        </div>
        <span className="w-[42px] text-center">85%</span>
        <ZoomButton label="Reduzir" />
        <div className="relative h-5 flex-1">
          <svg width="100%" height="20">
            <path d="M0 11.500h140" stroke="#dceafc" /><path d="M0 10.500h140" stroke="#6a8fc2" />
            <path d="M63.500 6v9" stroke="#dceafc" />
            <path d="M47.500 2.500h10v10l-5 5-5-5z" fill="#e8f0fa" stroke="#44618f" />
            <path d="M52.500 5v9" stroke="#8aa3c8" strokeWidth="2" />
          </svg>
          <input type="range" aria-label="Zoom" min={10} max={400} defaultValue={85} className="absolute inset-0 w-full opacity-0" />
        </div>
        <ZoomButton label="Ampliar" plus />
        <svg width="13" height="13" className="mb-1 ml-[6px] mr-[2px] self-end" shapeRendering="crispEdges">
          <path d="M9 0h3v3H9zM5 5h3v3H5zM9 5h3v3H9zM0 9h3v3H0zM5 9h3v3H5zM9 9h3v3H9z" fill="#4f73a8" />
        </svg>
      </div>
    </footer>
  );
}

export default function App() {
  return (
    <div className="h-screen overflow-hidden bg-[#4c6a6f] pl-px pt-1 font-['Noto_Sans','Open_Sans',sans-serif] text-[12px]">
      <div className="h-full rounded-tl-lg border-l border-t border-[#101a20] bg-[#101a20]">
        <div className="flex h-full flex-col rounded-tl-lg border-b border-l border-t border-[#d5e6ec] bg-[linear-gradient(#9fb4bf_0%,#c3d0d8_10%,#c3d0d8_27%,#7f9fac_28%,#7f9fac_36%,#344c5a_45%,#344c5a_49%,#4a7080_65%,#5b8794_85%,#62909c_100%)] pb-[5px]">
          <TitleBar />
          <div className="mx-1 flex min-h-0 flex-1 flex-col border border-[#c6d8e0]">
            <div className="flex min-h-0 flex-1 flex-col border border-[#2c3f55] bg-[#d3e3f6]">
              <RibbonTabs />
              <Ribbon />
              <FormulaBar />
              <div className="mt-[3px] flex min-h-0 flex-1 border-t border-[#6590bf]">
                <Sheet />
                <VScroll />
              </div>
              <SheetBar />
              <StatusBar />
            </div>
          </div>
        </div>
      </div>
    </div>
  );
}
